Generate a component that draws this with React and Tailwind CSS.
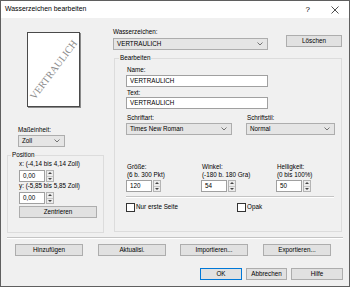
const ui = { fontFamily: '"Liberation Sans", Arial, sans-serif' };

function Chevron() {
  return (
    <svg width="6" height="4" viewBox="0 0 6 4" className="shrink-0">
      <polyline points="0.5,0.5 3,3 5.5,0.5" fill="none" stroke="#555" strokeWidth="0.8" />
    </svg>
  );
}

function Combo({ value, w }) {
  return (
    <div
      className="flex h-[12px] items-center justify-between border border-[#adadad] bg-[#e5e5e5] pl-[3px] pr-[4px] text-[6.3px] leading-none"
      style={{ width: w }}
    >
      <span>{value}</span>
      <Chevron />
    </div>
  );
}

function Btn({ label, w, primary }) {
  return (
    <div
      className={
        "flex h-[12px] items-center justify-center bg-[#e1e1e1] text-[6.3px] leading-none " +
        (primary ? "border border-[#0078d7]" : "border border-[#adadad]")
      }
      style={{ width: w }}
    >
      {label}
    </div>
  );
}

function Input({ value, w }) {
  return (
    <div
      className="flex h-[12px] items-center border border-[#a0a0a0] bg-white pl-[3px] text-[6.3px] leading-none"
      style={{ width: w }}
    >
      {value}
    </div>
  );
}

function Spin({ value }) {
  return (
    <div className="flex h-[12px] w-[35px]">
      <div className="flex w-[26px] items-center border border-[#a0a0a0] bg-white pl-[3px] text-[6.3px] leading-none">
        {value}
      </div>
      <div className="ml-[1px] flex w-[8px] flex-col border border-[#b4b4b4] bg-[#ececec]">
        <div className="flex flex-1 items-center justify-center border-b border-[#c8c8c8]">
          <svg width="4" height="2" viewBox="0 0 4 2">
            <polygon points="0,2 2,0 4,2" fill="#444" />
          </svg>
        </div>
        <div className="flex flex-1 items-center justify-center">
          <svg width="4" height="2" viewBox="0 0 4 2">
            <polygon points="0,0 2,2 4,0" fill="#444" />
          </svg>
        </div>
      </div>
    </div>
  );
}

function Label({ children, className = "" }) {
  return <div className={"h-[8px] text-[6.3px] leading-[8px] whitespace-nowrap " + className}>{children}</div>;
}

function Check({ label }) {
  return (
    <div className="flex items-center gap-[1px] text-[6.3px] leading-none">
      <div className="h-[9px] w-[9px] border border-[#333] bg-white" />
      <span>{label}</span>
    </div>
  );
}

export default function App() {
  return (
    <div
      className="flex h-[287px] w-[350px] flex-col overflow-hidden border border-[#5f5f5f] bg-[#f0f0f0] text-black"
      style={ui}
    >
      {/* title bar */}
      <div className="flex h-[17px] shrink-0 items-center bg-white pl-[4px] text-[6.9px]">
        <span>Wasserzeichen bearbeiten</span>
        <span className="ml-auto mr-[21px] text-[8px]">?</span>
        <svg width="8" height="8" viewBox="0 0 8 8" className="mr-[10px]">
          <path d="M0.5 0.5 L7.5 7.5 M7.5 0.5 L0.5 7.5" stroke="#222" strokeWidth="0.8" />
        </svg>
      </div>

      {/* main area */}
      <div className="flex shrink-0">
        {/* left column */}
        <div className="ml-[6px] flex w-[97px] flex-col">
          <div className="relative ml-[20px] mt-[14px] h-[75px] w-[53px] border border-[#4a4a4a] bg-white shadow-[1px_1px_0_#8a8a8a]">
            <span
              className="absolute left-1/2 top-1/2 whitespace-nowrap text-[10.2px] leading-none text-[#8a8a8a]"
              style={{
                fontFamily: '"Liberation Serif", "Times New Roman", serif',
                transform: "translate(-50%, -50%) rotate(-53deg)",
              }}
            >
              VERTRAULICH
            </span>
          </div>
          <Label className="ml-[11px] mt-[19px]">Maßeinheit:</Label>
          <div className="ml-[11px] mt-[1px]">
            <Combo value="Zoll" w={47} />
          </div>
          <div className="relative mt-[8px] h-[78px] border border-[#dcdcdc]">
            <span className="absolute left-[3px] top-[-5px] bg-[#f0f0f0] px-[1px] text-[6.3px] leading-[8px]">
              Position
            </span>
            <div className="ml-[11px] mt-[4px] flex flex-col">
              <div className="h-[7px] text-[6.3px] leading-[7px]">x: (-4,14 bis 4,14 Zoll)</div>
              <div className="mt-[3px]">
                <Spin value="0,00" />
              </div>
              <div className="h-[7px] text-[6.3px] leading-[7px]">y: (-5,85 bis 5,85 Zoll)</div>
              <div className="mt-[3px]">
                <Spin value="0,00" />
              </div>
              <div className="mt-[2px]">
                <Btn label="Zentrieren" w={78} />
              </div>
            </div>
          </div>
        </div>

        {/* right column */}
        <div className="ml-[9px] flex w-[229px] flex-col">
          <div className="mt-[11px] h-[6px] text-[6.3px] leading-[6px]">Wasserzeichen:</div>
          <div className="flex items-start">
            <div className="mt-[3px]">
              <Combo value="VERTRAULICH" w={155} />
            </div>
            <div className="ml-[18px]">
              <Btn label="Löschen" w={56} />
            </div>
          </div>
          <div className="relative ml-[1px] mt-[8px] h-[174px] border border-[#dcdcdc]">
            <span className="absolute left-[4px] top-[-5px] bg-[#f0f0f0] px-[1px] text-[6.3px] leading-[8px]">
              Bearbeiten
            </span>
            <div className="flex flex-col pl-[11px] pt-[7px]">
              <Label className="ml-[1px]">Name:</Label>
              <div className="mt-[1px]">
                <Input value="VERTRAULICH" w={142} />
              </div>
              <Label className="ml-[1px] mt-[2px]">Text:</Label>
              <Input value="VERTRAULICH" w={142} />

              <div className="mt-[5px] flex">
                <div className="flex w-[106px] flex-col">
                  <Label className="ml-[1px]">Schriftart:</Label>
                  <div className="mt-[1px]">
                    <Combo value="Times New Roman" w={106} />
                  </div>
                </div>
                <div className="ml-[14px] flex w-[89px] flex-col">
                  <Label className="ml-[1px]">Schriftstil:</Label>
                  <div className="mt-[1px]">
                    <Combo value="Normal" w={89} />
                  </div>
                </div>
              </div>

              <div className="mt-[28px] flex">
                <div className="flex w-[75px] flex-col">
                  <Label className="ml-[1px]">Größe:</Label>
                  <Label className="ml-[1px]">(6 b. 300 Pkt)</Label>
                  <div className="mt-[1px]">
                    <Spin value="120" />
                  </div>
                </div>
                <div className="flex w-[75px] flex-col">
                  <Label className="ml-[1px]">Winkel:</Label>
                  <Label className="ml-[1px]">(-180 b. 180 Gra)</Label>
                  <div className="mt-[1px]">
                    <Spin value="54" />
                  </div>
                </div>
                <div className="flex w-[60px] flex-col">
                  <Label className="ml-[1px]">Helligkeit:</Label>
                  <Label className="ml-[1px]">(0 bis 100%)</Label>
                  <div className="mt-[1px]">
                    <Spin value="50" />
                  </div>
                </div>
              </div>

              <div className="mt-[4px] w-[208px] border-t border-b border-t-[#c4c4c4] border-b-white" />

              <div className="mt-[5px] flex">
                <div className="w-[111px]">
                  <Check label="Nur erste Seite" />
                </div>
                <Check label="Opak" />
              </div>
            </div>
          </div>
        </div>
      </div>

      {/* separator */}
      <div className="ml-[6px] mt-[4px] w-[336px] border-t border-b border-t-[#c4c4c4] border-b-white" />

      {/* buttons row 1 */}
      <div className="ml-[14px] mt-[5px] flex">
        <Btn label="Hinzufügen" w={68} />
        <div className="ml-[15px]">
          <Btn label="Aktualisi." w={68} />
        </div>
        <div className="ml-[14px]">
          <Btn label="Importieren..." w={68} />
        </div>
        <div className="ml-[15px]">
          <Btn label="Exportieren..." w={68} />
        </div>
      </div>

      {/* buttons row 2 */}
      <div className="mr-[6px] mt-[12px] flex justify-end gap-[4px]">
        <Btn label="OK" w={42} primary />
        <Btn label="Abbrechen" w={41} />
        <Btn label="Hilfe" w={52} />
      </div>
    </div>
  );
}
